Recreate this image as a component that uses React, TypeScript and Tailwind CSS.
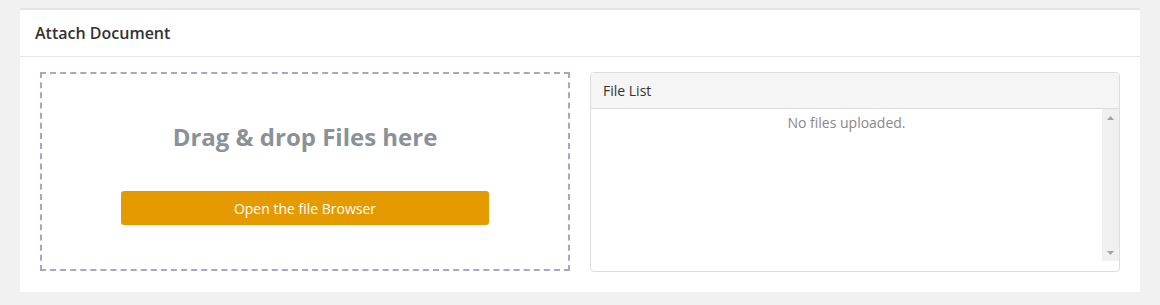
import React from "react";

export default function App() {
  return (
    <div
      className="w-[1160px] h-[305px] bg-[#f1f1f1] pt-[8px] px-[20px]"
      style={{ fontFamily: '"Open Sans", "Liberation Sans", sans-serif' }}
    >
      <div className="bg-white border-t-2 border-[#e1e5ea] h-[284px] flex flex-col">
        <div className="h-[47px] border-b border-[#e6e6e6] flex items-center px-[15px]">
          <span className="text-[16px] font-semibold text-[#333]">Attach Document</span>
        </div>
        <div className="flex gap-[20px] px-[20px] pt-[15px]">
          <div className="w-[530px] h-[199px] border-2 border-dashed border-[#aaa5c6] flex flex-col items-center pt-[51px]">
            <div className="text-[24px] leading-[24px] font-bold text-[#8a9198]">Drag &amp; drop Files here</div>
            <button className="mt-[42px] w-[368px] h-[34px] bg-[#e59a00] text-white text-[14px] rounded-[3px]">
              Open the file Browser
            </button>
          </div>
          <div className="w-[530px] h-[200px] border border-[#dddddd] rounded-[4px] flex flex-col overflow-hidden">
            <div className="h-[36px] bg-[#f5f5f5] border-b border-[#dddddd] flex items-center px-[12px]">
              <span className="text-[14px] text-[#333]">File List</span>
            </div>
            <div className="flex h-[152px]">
              <div className="flex-1 flex justify-center pt-[4px]">
                <span className="text-[14px] leading-[20px] text-[#888]">No files uploaded.</span>
              </div>
              <div className="w-[17px] bg-[#f0f0f0] flex flex-col justify-between">
                <div className="h-[17px] flex items-center justify-center">
                  <svg width="7" height="4" viewBox="0 0 7 4">
                    <path d="M3.5 0 L7 4 L0 4 Z" fill="#a3a3a3" />
                  </svg>
                </div>
                <div className="h-[17px] flex items-center justify-center">
                  <svg width="7" height="4" viewBox="0 0 7 4">
                    <path d="M0 0 L7 0 L3.5 4 Z" fill="#a3a3a3" />
                  </svg>
                </div>
              </div>
            </div>
          </div>
        </div>
      </div>
    </div>
  );
}
